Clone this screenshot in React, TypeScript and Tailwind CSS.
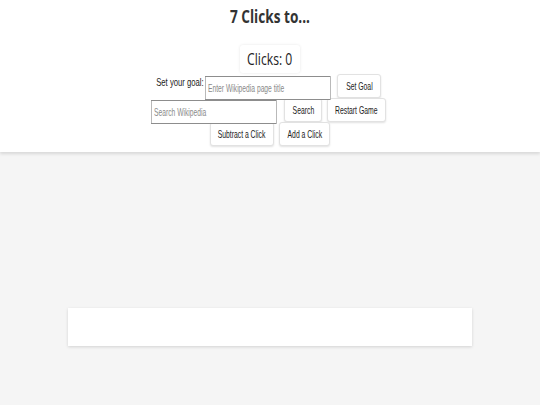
import React from 'react';

const Btn: React.FC<{ label: string; w: string }> = ({ label, w }) => (
  <button
    className={`${w} h-[24px] flex items-center justify-center bg-white rounded-[3px] border border-[#e2e2e2] shadow-[0_1px_2px_rgba(0,0,0,0.12)] text-[11px] text-[#222] font-['Liberation_Sans',Arial,sans-serif]`}
  >
    <span className="inline-block whitespace-nowrap scale-x-[0.62]">{label}</span>
  </button>
);

const Field: React.FC<{ placeholder: string }> = ({ placeholder }) => (
  <div className="w-[126px] h-[24px] overflow-visible">
    <input
      placeholder={placeholder}
      className="w-[206px] h-[24px] origin-left scale-x-[0.61] border border-[#8d8d8d] bg-white px-[4px] text-[11px] outline-none placeholder:text-[#8a8a8a] font-['Liberation_Sans',Arial,sans-serif]"
    />
  </div>
);

const App: React.FC = () => {
  return (
    <div className="min-h-screen bg-[#f5f5f5] font-['Open_Sans',sans-serif]">
      <header className="bg-white h-[152px] shadow-[0_2px_3px_rgba(0,0,0,0.12)] flex flex-col items-center">
        <h1 className="mt-[4px] h-[26px] flex items-center text-[17px] font-bold text-[#333]">
          <span className="inline-block whitespace-nowrap scale-x-[0.8]">7 Clicks to...</span>
        </h1>

        <div className="mt-[15px] w-[60px] h-[28px] flex items-center justify-center bg-white rounded-[3px] shadow-[0_0_3px_rgba(0,0,0,0.1)] text-[16px] text-[#222]">
          <span className="inline-block whitespace-nowrap scale-x-[0.76]">Clicks: 0</span>
        </div>

        <div className="mt-[1px] flex items-start pr-[3px]">
          <div className="w-[48px] flex justify-center text-[11px] text-[#222] font-['Liberation_Sans',Arial,sans-serif]">
            <span className="inline-block whitespace-nowrap scale-x-[0.7]">Set your goal:</span>
          </div>
          <div className="ml-[1px]">
            <Field placeholder="Enter Wikipedia page title" />
          </div>
          <div className="ml-[6px]">
            <Btn label="Set Goal" w="w-[44px]" />
          </div>
        </div>

        <div className="flex items-start pr-[3px]">
          <Field placeholder="Search Wikipedia" />
          <div className="ml-[7px] flex gap-[5px]">
            <Btn label="Search" w="w-[38px]" />
            <Btn label="Restart Game" w="w-[59px]" />
          </div>
        </div>

        <div className="flex gap-[5px]">
          <Btn label="Subtract a Click" w="w-[64px]" />
          <Btn label="Add a Click" w="w-[51px]" />
        </div>
      </header>

      <div className="mx-[68px] mt-[156px] h-[38px] bg-white shadow-[0_1px_3px_rgba(0,0,0,0.14)]" />
    </div>
  );
};

export default App;
